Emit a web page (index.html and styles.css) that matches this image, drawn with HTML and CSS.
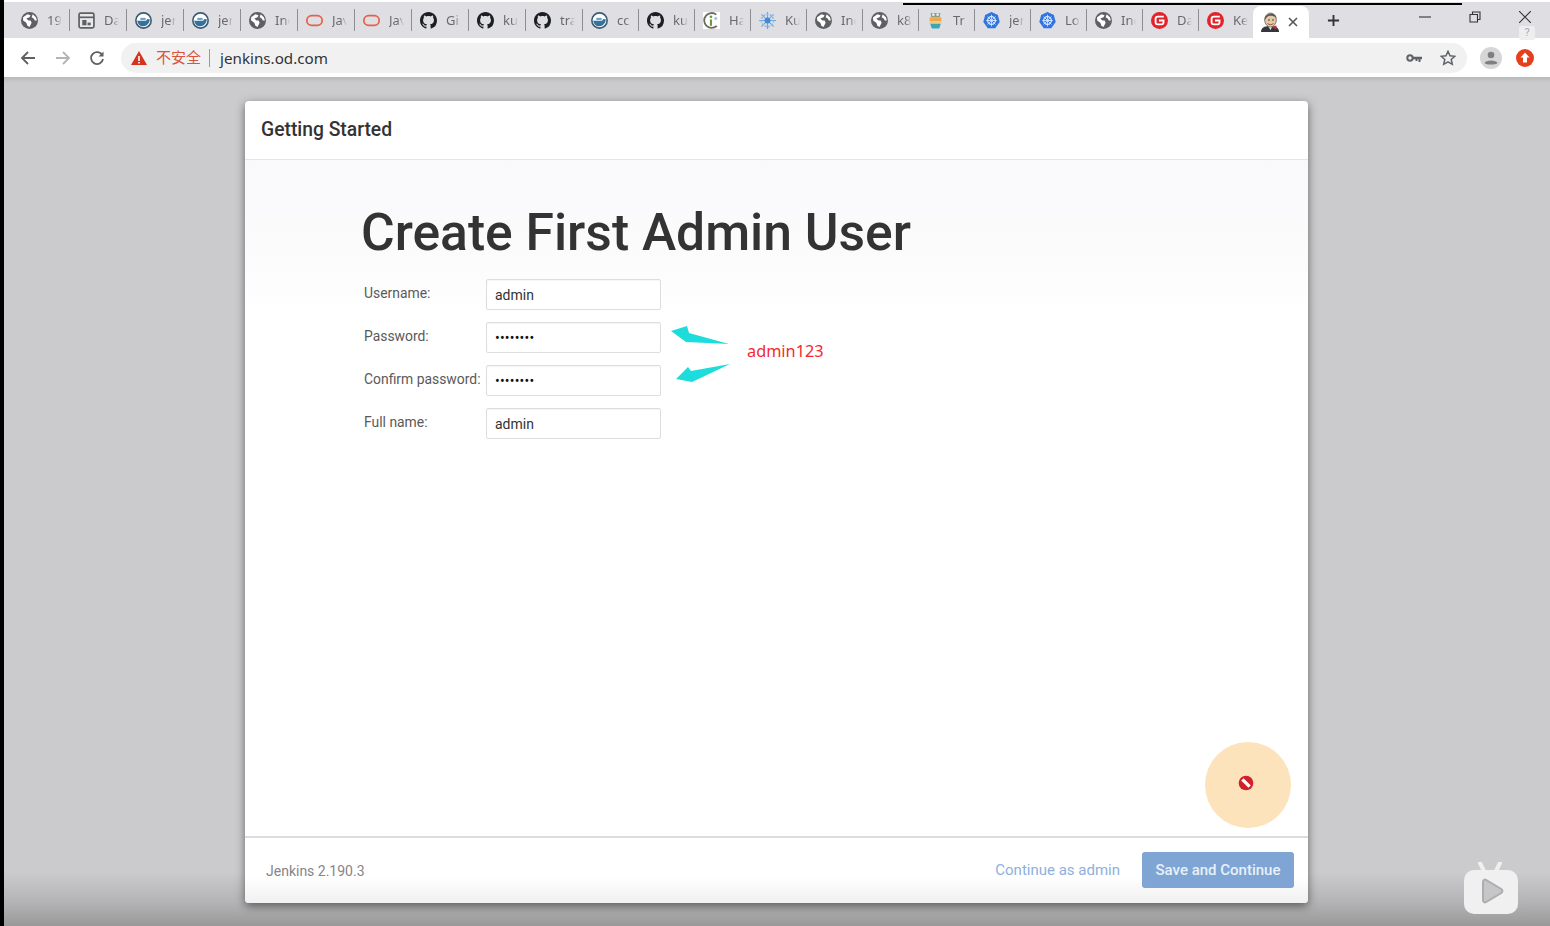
FILE: index.html
```html
<!DOCTYPE html>
<html>
<head>
    <title>Setup Wizard [Jenkins]</title>
    <link rel="stylesheet" href="styles.css">
</head>
<body>
    <svg class="sprite" width="0" height="0">
        <symbol id="i-globe" viewBox="0 0 16 16">
            <circle cx="8" cy="8" r="8" fill="#5f6063"/>
            <path d="M2 5l4-3 3 1-1 2-3 1 2 2 2 0 1 2-2 4-2-1-1-3-3-2zM11 2l3 3 1 3-2 0-1-2-2-1z" fill="#fff"/>
        </symbol>
        <symbol id="i-dash" viewBox="0 0 16 16">
            <rect x="1" y="1" width="14" height="14" rx="1.5" fill="#e9e9ea" stroke="#5f6063" stroke-width="1.6"/>
            <path d="M1 5h14" stroke="#5f6063" stroke-width="1.6"/>
            <rect x="4" y="7.5" width="4" height="5" fill="#5f6063"/>
            <rect x="9" y="10" width="3" height="2.5" fill="#5f6063"/>
        </symbol>
        <symbol id="i-docker" viewBox="0 0 16 16">
            <circle cx="8" cy="8" r="7.2" fill="#fff" stroke="#3c5a70" stroke-width="1.5"/>
            <path d="M2 8.2h8.5c.6-1.6 1.7-2.2 3.5-1.2-.3 3.500-3 6.500-6.500 6.500-2.800 0-4.800-2.200-5.500-5.300z" fill="#33739e"/>
            <path d="M5 7.500v-2h5v2z" fill="#6ba2c4"/>
        </symbol>
        <symbol id="i-oracle" viewBox="0 0 16 16">
            <rect x="0.8" y="3.500" width="14.400" height="9" rx="4.500" fill="none" stroke="#e4604a" stroke-width="1.600"/>
        </symbol>
        <symbol id="i-github" viewBox="0 0 16 16">
            <path fill="#1b1f23" d="M8 0C3.58 0 0 3.58 0 8c0 3.54 2.29 6.53 5.47 7.59.4.07.55-.17.55-.38 0-.19-.01-.82-.01-1.49-2.01.37-2.53-.49-2.69-.94-.09-.23-.48-.94-.82-1.13-.28-.15-.68-.52-.01-.53.63-.01 1.08.58 1.23.82.72 1.21 1.87.87 2.33.66.07-.52.28-.87.51-1.07-1.78-.2-3.64-.89-3.64-3.95 0-.87.31-1.59.82-2.15-.08-.2-.36-1.02.08-2.12 0 0 .67-.21 2.2.82.64-.18 1.32-.27 2-.27.68 0 1.36.09 2 .27 1.53-1.04 2.2-.82 2.2-.82.44 1.1.16 1.92.08 2.12.51.56.82 1.27.82 2.15 0 3.07-1.87 3.75-3.65 3.95.29.25.54.73.54 1.48 0 1.07-.01 1.93-.01 2.2 0 .21.15.46.55.38A8.013 8.013 0 0016 8c0-4.42-3.58-8-8-8z"/>
        </symbol>
        <symbol id="i-helm" viewBox="0 0 16 16">
            <rect width="16" height="16" fill="#fff"/>
            <path d="M12.500 2.500A7 7 0 1 0 13 13" fill="none" stroke="#6b6b60" stroke-width="1.700"/>
            <circle cx="7.500" cy="4.500" r="1.300" fill="#6b9c3c"/>
            <path d="M6.500 7h2v6h-2z" fill="#6b9c3c"/>
            <circle cx="12" cy="6" r="1.500" fill="#a9c8e0"/>
        </symbol>
        <symbol id="i-wheel" viewBox="0 0 16 16">
            <g stroke="#6ca6dd" stroke-width="1.100">
                <path d="M8 0v16M0 8h16M2.300 2.300l11.400 11.400M13.700 2.300L2.300 13.700"/>
            </g>
            <circle cx="8" cy="8" r="5.800" fill="none" stroke="#8dbde8" stroke-width="1.400" stroke-dasharray="2 1.200"/>
            <circle cx="8" cy="8" r="2.800" fill="#3f8ad6"/>
        </symbol>
        <symbol id="i-traefik" viewBox="0 0 16 16">
            <path d="M3.500 1h9l-.5 4H4z" fill="#8f9a78"/>
            <circle cx="6" cy="2.500" r="1.300" fill="#dfeff0"/>
            <circle cx="10" cy="2.500" r="1.300" fill="#dfeff0"/>
            <path d="M2.500 5h11v3.500h-11z" fill="#f0a64b"/>
            <path d="M2.500 8.500h11V11h-11z" fill="#eccb8c"/>
            <path d="M3 11h10l-1.500 4.500h-7z" fill="#3ba7b5"/>
        </symbol>
        <symbol id="i-k8s" viewBox="0 0 16 16">
            <path d="M8 0l6 2.900 1.700 6.500-4.200 5.800H4.500L.3 9.400 2 2.900z" fill="#2f74e0"/>
            <circle cx="8" cy="8" r="3.600" fill="none" stroke="#dce8fb" stroke-width="1.200"/>
            <path d="M8 2.500v11M3 8h10M4.300 4.300l7.400 7.400M11.700 4.300l-7.400 7.400" stroke="#dce8fb" stroke-width=".8"/>
        </symbol>
        <symbol id="i-gitee" viewBox="0 0 16 16">
            <circle cx="8" cy="8" r="8" fill="#e0242c"/>
            <path d="M12 4.300H6.500A2.200 2.200 0 0 0 4.300 6.500v3.200a2 2 0 0 0 2 2h3.500a2 2 0 0 0 2-2V8H7.500" fill="none" stroke="#fff" stroke-width="1.700"/>
        </symbol>
        <symbol id="i-butler" viewBox="0 0 18 20">
            <path d="M0 20c0-4 3-6 9-6s9 2 9 6z" fill="#33363f"/>
            <path d="M7 14l2.500 4 2-4z" fill="#f4f1ec"/>
            <path d="M10.500 15l5-1.500v4z" fill="#b5332e"/>
            <ellipse cx="9.500" cy="8" rx="5.800" ry="7" fill="#e6c9a8" stroke="#6b5a4a" stroke-width=".8"/>
            <path d="M3.700 8C3 1 15 -1 15.500 6 12 3 8 3.500 6 5 5 6 4.500 7 3.700 8z" fill="#55524c"/>
            <path d="M6.500 11.500c2 1.500 4 1.500 6 0" stroke="#8a5a44" fill="none"/>
            <circle cx="8" cy="8" r=".8" fill="#333"/>
            <circle cx="12" cy="8" r=".8" fill="#333"/>
        </symbol>
    </svg>

    <div class="recording-line"></div>

    <header class="chrome">
        <div class="tab-strip">
            <div class="tab"><svg class="tab-icon"><use href="#i-globe"/></svg><span class="tab-title">19</span></div>
            <div class="tab"><svg class="tab-icon"><use href="#i-dash"/></svg><span class="tab-title">Da</span></div>
            <div class="tab"><svg class="tab-icon"><use href="#i-docker"/></svg><span class="tab-title">jen</span></div>
            <div class="tab"><svg class="tab-icon"><use href="#i-docker"/></svg><span class="tab-title">jen</span></div>
            <div class="tab"><svg class="tab-icon"><use href="#i-globe"/></svg><span class="tab-title">Ind</span></div>
            <div class="tab"><svg class="tab-icon"><use href="#i-oracle"/></svg><span class="tab-title">Jav</span></div>
            <div class="tab"><svg class="tab-icon"><use href="#i-oracle"/></svg><span class="tab-title">Jav</span></div>
            <div class="tab"><svg class="tab-icon"><use href="#i-github"/></svg><span class="tab-title">Gi</span></div>
            <div class="tab"><svg class="tab-icon"><use href="#i-github"/></svg><span class="tab-title">ku</span></div>
            <div class="tab"><svg class="tab-icon"><use href="#i-github"/></svg><span class="tab-title">tra</span></div>
            <div class="tab"><svg class="tab-icon"><use href="#i-docker"/></svg><span class="tab-title">cc</span></div>
            <div class="tab"><svg class="tab-icon"><use href="#i-github"/></svg><span class="tab-title">ku</span></div>
            <div class="tab"><svg class="tab-icon"><use href="#i-helm"/></svg><span class="tab-title">Ha</span></div>
            <div class="tab"><svg class="tab-icon"><use href="#i-wheel"/></svg><span class="tab-title">Ku</span></div>
            <div class="tab"><svg class="tab-icon"><use href="#i-globe"/></svg><span class="tab-title">Ind</span></div>
            <div class="tab"><svg class="tab-icon"><use href="#i-globe"/></svg><span class="tab-title">k8</span></div>
            <div class="tab"><svg class="tab-icon"><use href="#i-traefik"/></svg><span class="tab-title">Tr</span></div>
            <div class="tab"><svg class="tab-icon"><use href="#i-k8s"/></svg><span class="tab-title">jen</span></div>
            <div class="tab"><svg class="tab-icon"><use href="#i-k8s"/></svg><span class="tab-title">Lo</span></div>
            <div class="tab"><svg class="tab-icon"><use href="#i-globe"/></svg><span class="tab-title">Ind</span></div>
            <div class="tab"><svg class="tab-icon"><use href="#i-gitee"/></svg><span class="tab-title">Da</span></div>
            <div class="tab tab-last"><svg class="tab-icon"><use href="#i-gitee"/></svg><span class="tab-title">Ke</span></div>
            <div class="tab-active">
                <svg class="butler" viewBox="0 0 18 20"><use href="#i-butler"/></svg>
                <svg class="tab-close" viewBox="0 0 10 10"><path d="M1 1l8 8M9 1l-8 8"/></svg>
            </div>
            <svg class="new-tab" viewBox="0 0 14 14"><path d="M7 1v12M1 7h12"/></svg>
            <div class="window-buttons">
                <svg class="win-btn" viewBox="0 0 12 12"><path d="M0 6h12"/></svg>
                <svg class="win-btn" viewBox="0 0 12 12"><path d="M1 3.500h7.500V11H1zM3.500 3.500V1H11v7.500H8.500"/></svg>
                <svg class="win-btn" viewBox="0 0 12 12"><path d="M0 0l12 12M12 0L0 12"/></svg>
            </div>
            <div class="help-tip">?</div>
        </div>
        <div class="toolbar">
            <svg class="nav-btn" viewBox="0 0 16 16"><path d="M15 8H2M8 2L2 8l6 6"/></svg>
            <svg class="nav-btn nav-off" viewBox="0 0 16 16"><path d="M1 8h13M8 2l6 6-6 6"/></svg>
            <svg class="nav-btn" viewBox="0 0 16 16"><path d="M13.500 5.500A6 6 0 1 0 14 9"/><path class="nav-fill" d="M14.500 1.500v5h-5z"/></svg>
            <div class="omnibox">
                <svg class="warn-icon" viewBox="0 0 16 14">
                    <path d="M8 0l8 14H0z" fill="#d5321f"/>
                    <path d="M7.200 5h1.600v5H7.200zM7.200 11h1.600v1.500H7.200z" fill="#fff"/>
                </svg>
                <span class="not-secure">不安全</span>
                <span class="url">jenkins.od.com</span>
                <div class="omni-actions">
                    <svg class="key-icon" viewBox="0 0 16 10">
                        <circle cx="4" cy="5" r="2.700" fill="none" stroke="#5f6368" stroke-width="2"/>
                        <path d="M7 3.800h9v2.400h-1.500V9h-2V6.200h-1V8h-2V6.200H7z" fill="#5f6368"/>
                    </svg>
                    <svg class="star-icon" viewBox="0 0 16 16"><path d="M8 1.300l2 4.500 4.900.5-3.700 3.200 1.100 4.800L8 11.800l-4.300 2.500 1.100-4.800L1.100 6.300 6 5.800z"/></svg>
                </div>
            </div>
            <svg class="avatar" viewBox="0 0 22 22">
                <circle cx="11" cy="11" r="11" fill="#d6d6d6"/>
                <circle cx="11" cy="8" r="3.300" fill="#7e7f82"/>
                <path d="M4.500 16c1-3.500 12-3.500 13 0-1.500 2-11.500 2-13 0z" fill="#7e7f82"/>
            </svg>
            <svg class="update-badge" viewBox="0 0 18 18">
                <circle cx="9" cy="9" r="9" fill="#e5401c"/>
                <path d="M9 3.500l4.500 5H11v5H7v-5H4.500z" fill="#fff"/>
            </svg>
        </div>
    </header>

    <main class="viewport">
        <section class="modal">
            <div class="modal-header">Getting Started</div>
            <div class="modal-body">
                <h1 class="page-title">Create First Admin User</h1>
                <form class="admin-form">
                    <label class="form-label">Username:</label>
                    <input class="form-input" type="text" value="admin">
                    <label class="form-label">Password:</label>
                    <input class="form-input" type="password" value="admin123">
                    <label class="form-label">Confirm password:</label>
                    <input class="form-input" type="password" value="admin123">
                    <label class="form-label">Full name:</label>
                    <input class="form-input" type="text" value="admin">

                    <svg class="note-arrows" viewBox="670 324 64 60">
                        <path d="M672 331l16-5 2 7 40 11-43-2z"/>
                        <path d="M677 379l12-12 3 4 39-7-38 18z"/>
                    </svg>
                    <span class="note-text">admin123</span>
                </form>
                <div class="cursor-dot">
                    <svg class="no-icon" viewBox="0 0 16 16">
                        <circle cx="8" cy="8" r="6.500" fill="#d0222a"/>
                        <path d="M4.800 4.800l6.400 6.400" stroke="#fff" stroke-width="3"/>
                    </svg>
                </div>
            </div>
            <div class="modal-footer">
                <span class="version">Jenkins 2.190.3</span>
                <a class="skip-link">Continue as admin</a>
                <button class="save-btn" type="button">Save and Continue</button>
            </div>
        </section>
        <svg class="video-logo" viewBox="0 0 54 52">
            <path d="M16 1l4 8M36 1l-4 8" stroke="#f0f0f0" stroke-width="4" stroke-linecap="round"/>
            <rect y="8" width="54" height="44" rx="10" fill="#f0f0f0"/>
            <path d="M19 20c0-2 1.500-3 3.300-2l15 9c1.500 1 1.500 3 0 4l-15 9c-1.800 1-3.300 0-3.300-2z" fill="#c6c6c8" stroke="#adadaf" stroke-width="2"/>
        </svg>
    </main>
</body>
</html>
```

FILE: styles.css
```css
* {
    box-sizing: border-box;
}
html, body {
    height: 100%;
}
body {
    margin: 0;
    display: flex;
    flex-direction: column;
    height: 926px;
    overflow: hidden;
    border-left: 4px solid #000;
    background-color: #fff;
    font-family: Roboto, "Noto Sans CJK SC", sans-serif;
}
.sprite {
    position: absolute;
}
.recording-line {
    position: absolute;
    top: 3px;
    left: 903px;
    width: 559px;
    height: 2px;
    background-color: #000;
    z-index: 2;
}

/* browser chrome */
.chrome {
    flex: none;
    height: 77px;
    padding-top: 2px;
    background-color: #fff;
}
.tab-strip {
    position: relative;
    display: flex;
    align-items: center;
    height: 36px;
    padding-left: 9px;
    background-color: #dfdee3;
}
.tab {
    display: flex;
    align-items: center;
    flex: none;
    width: 56px;
    height: 22px;
    padding-left: 7.500px;
    border-right: 1px solid #8f8f92;
}
.tab:nth-child(-n+10) {
    width: 57px;
}
.tab-last {
    border-right: none;
}
.tab-icon {
    width: 17px;
    height: 17px;
    flex: none;
}
.tab-title {
    width: 15px;
    margin-left: 9.500px;
    overflow: hidden;
    white-space: nowrap;
    font-family: "Noto Sans", sans-serif;
    font-size: 13px;
    color: #6a6a6e;
    -webkit-mask-image: linear-gradient(to right, #000 55%, transparent);
    mask-image: linear-gradient(to right, #000 55%, transparent);
}
.tab-active {
    align-self: flex-end;
    display: flex;
    align-items: center;
    flex: none;
    width: 56px;
    height: 32px;
    margin-left: -2px;
    padding-left: 8px;
    background-color: #fff;
    border-radius: 8px 8px 0 0;
}
.butler {
    width: 18px;
    height: 20px;
}
.tab-close {
    width: 10px;
    height: 10px;
    margin-left: 9px;
    fill: none;
    stroke: #55565a;
    stroke-width: 1.6;
}
.new-tab {
    width: 13px;
    height: 13px;
    margin-left: 18px;
    fill: none;
    stroke: #333;
    stroke-width: 2;
}
.window-buttons {
    display: flex;
    align-items: center;
    gap: 38px;
    margin-left: auto;
    margin-right: 19px;
    margin-bottom: 6px;
}
.win-btn {
    width: 12px;
    height: 12px;
    fill: none;
    stroke: #333;
    stroke-width: 1.1;
}
.help-tip {
    position: absolute;
    top: 24px;
    right: 15px;
    width: 16px;
    height: 14px;
    background-color: #eeeef0;
    border-radius: 2px;
    font-size: 11px;
    line-height: 14px;
    text-align: center;
    color: #aaa;
}
.toolbar {
    display: flex;
    align-items: center;
    height: 39px;
    padding: 5px 0 4px 16px;
}
.nav-btn {
    width: 16px;
    height: 16px;
    margin-right: 18.500px;
    fill: none;
    stroke: #5f6063;
    stroke-width: 1.8;
}
.nav-off {
    stroke: #b4b4b6;
}
.nav-fill {
    fill: #5f6063;
    stroke: none;
}
.omnibox {
    display: flex;
    align-items: center;
    width: 1346px;
    height: 30px;
    margin-left: -2.500px;
    padding: 0 11px 0 10px;
    background-color: #f1f1f1;
    border-radius: 15px;
}
.warn-icon {
    width: 16px;
    height: 14px;
    flex: none;
}
.not-secure {
    margin-left: 9px;
    padding-right: 8px;
    border-right: 1px solid #9a9a9a;
    font-size: 15px;
    line-height: 18px;
    color: #d9543f;
}
.url {
    margin-left: 10px;
    margin-bottom: 1px;
    font-family: "Noto Sans", sans-serif;
    font-size: 15.200px;
    color: #333;
}
.omni-actions {
    display: flex;
    align-items: center;
    gap: 18px;
    margin-left: auto;
}
.key-icon {
    width: 16px;
    height: 10px;
}
.star-icon {
    width: 16px;
    height: 16px;
    fill: none;
    stroke: #5f6368;
    stroke-width: 1.500;
}
.avatar {
    width: 22px;
    height: 22px;
    margin-left: 13px;
}
.update-badge {
    width: 18px;
    height: 18px;
    margin-left: 14px;
}

/* page behind the wizard */
.viewport {
    position: relative;
    flex: 1;
    display: flex;
    justify-content: center;
    align-items: flex-start;
    padding-top: 24px;
    background: linear-gradient(to bottom, #b9b9bb 0, #cbcacd 6px, #cbcacd 795px, #b4b4b6 825px, #999 849px);
}
.modal {
    display: flex;
    flex-direction: column;
    width: 1063px;
    height: 802px;
    margin-left: -1px;
    background-color: #fff;
    border-radius: 4px;
    box-shadow: 0 3px 10px rgba(0, 0, 0, 0.5);
}
.modal-header {
    flex: none;
    height: 59px;
    padding: 0 16px;
    border-bottom: 1px solid #e5e5e5;
    font-size: 19.300px;
    font-weight: 500;
    line-height: 57px;
    color: #333;
}
.modal-body {
    position: relative;
    flex: 1;
    padding: 42px 0 0 116px;
    background: linear-gradient(to bottom, #f9f8fa 0, #fcfbfc 90px, #fff 160px);
}
.page-title {
    margin: 0 0 15px;
    font-size: 51.600px;
    font-weight: 500;
    line-height: 62px;
    color: #333;
}
.admin-form {
    position: relative;
    display: grid;
    grid-template-columns: 122px 175px;
    grid-auto-rows: 31px;
    row-gap: 12px;
    margin-left: 3px;
}
.form-label {
    font-size: 13.900px;
    line-height: 29px;
    color: #5a5a5a;
    white-space: nowrap;
}
.form-input {
    width: 175px;
    height: 31px;
    padding: 0 8px;
    border: 1px solid #ddd;
    border-radius: 2px;
    background-color: #fff;
    box-shadow: inset 0 1px 1px rgba(0, 0, 0, 0.04);
    font-family: Roboto, sans-serif;
    font-size: 14px;
    color: #333;
}
.form-input[type="password"] {
    color: #111;
    letter-spacing: 0.200px;
}
.note-arrows {
    position: absolute;
    left: 305px;
    top: 45px;
    width: 64px;
    height: 60px;
    fill: #1cdcdc;
}
.note-text {
    position: absolute;
    left: 383px;
    top: 60px;
    font-family: "Noto Sans", sans-serif;
    font-size: 16.300px;
    line-height: 24px;
    color: #f5282d;
}
.cursor-dot {
    position: absolute;
    right: 17px;
    bottom: 8px;
    display: flex;
    align-items: center;
    justify-content: center;
    width: 86px;
    height: 86px;
    padding: 0 5px 4px 0;
    border-radius: 50%;
    background-color: #fde3bc;
}
.no-icon {
    width: 18px;
    height: 18px;
}
.modal-footer {
    display: flex;
    align-items: center;
    flex: none;
    height: 67px;
    padding: 0 14px 2px 21px;
    border-top: 2px solid #dcdcdc;
    border-radius: 0 0 4px 4px;
    background: linear-gradient(to bottom, #fff 60%, #f0f0f1);
}
.version {
    font-size: 14px;
    margin-top: 2px;
    color: #85858a;
}
.skip-link {
    margin-left: auto;
    font-size: 15px;
    color: #8eb1dd;
}
.save-btn {
    width: 152px;
    height: 36px;
    margin-left: 22px;
    padding: 0;
    border: none;
    border-radius: 3px;
    background-color: #7ea5d4;
    font-family: Roboto, sans-serif;
    font-size: 15px;
    font-weight: 500;
    color: #e8f0f8;
}
.video-logo {
    position: absolute;
    left: 1460px;
    top: 785px;
    width: 54px;
    height: 52px;
}
```
